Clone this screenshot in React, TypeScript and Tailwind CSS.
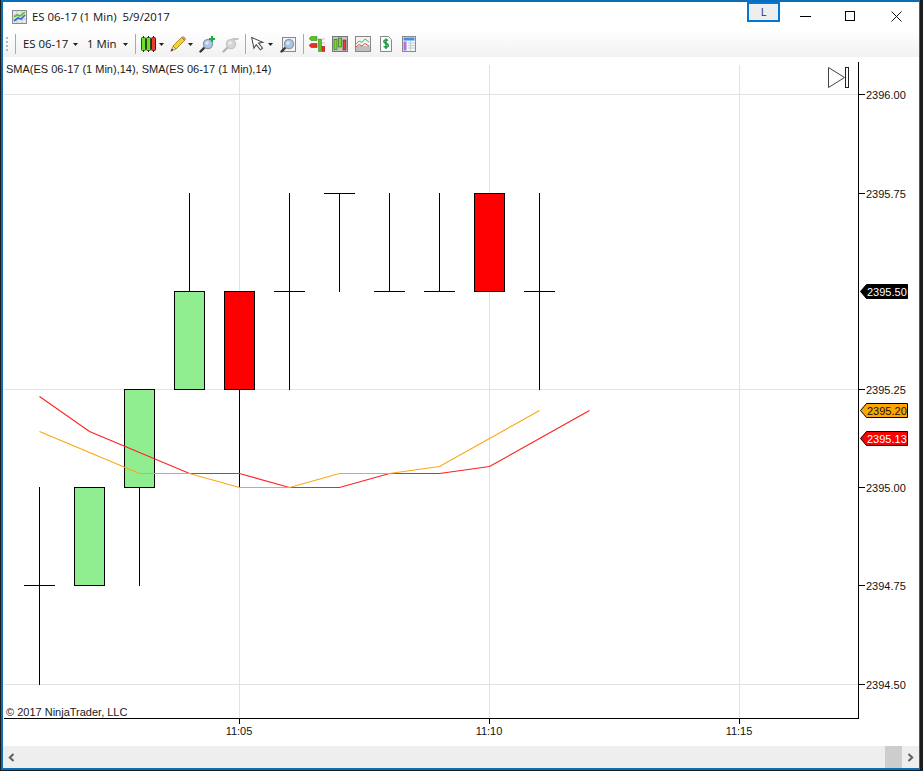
import React from "react";

const Caret = () => (
  <svg width="5" height="3" viewBox="0 0 5 3" className="shrink-0">
    <path d="M0 0h5L2.5 3z" fill="#222" />
  </svg>
);

const Sep = ({ cls }: { cls: string }) => <div className={`w-px h-[20px] bg-[#a8a8a8] shrink-0 ${cls}`} />;

const Lens = ({ gray }: { gray?: boolean }) => (
  <>
    <path d="M1.5 15.5 6 11" stroke={gray ? "#b5b5b5" : "#333"} strokeWidth="2.4" strokeLinecap="round" />
    <circle cx="9" cy="8" r="4.6" fill={gray ? "#d5d5d5" : "#a9c6e6"} stroke={gray ? "#c4c4c4" : "#8b9bab"} strokeWidth="1.2" />
    <circle cx="8" cy="7" r="1.8" fill={gray ? "#ececec" : "#dbe9f8"} />
  </>
);

const prices: [string, number][] = [
  ["2396.00", 94],
  ["2395.75", 193],
  ["2395.25", 389],
  ["2395.00", 487],
  ["2394.75", 585],
  ["2394.50", 684],
];

const times: [string, number][] = [
  ["11:05", 239],
  ["11:10", 489],
  ["11:15", 739],
];

type Candle = { x: number; wick: [number, number][]; body?: [number, number, string]; doji?: number };
const candles: Candle[] = [
  { x: 39, wick: [[487, 685]], doji: 585 },
  { x: 89, wick: [], body: [487, 585, "#90ee90"] },
  { x: 139, wick: [[487, 586]], body: [389, 487, "#90ee90"] },
  { x: 189, wick: [[193, 291]], body: [291, 389, "#90ee90"] },
  { x: 239, wick: [[389, 487]], body: [291, 389, "#ff0000"] },
  { x: 289, wick: [[193, 390]], doji: 291 },
  { x: 339, wick: [[193, 292]], doji: 193 },
  { x: 389, wick: [[193, 291]], doji: 291 },
  { x: 439, wick: [[193, 291]], doji: 291 },
  { x: 489, wick: [], body: [193, 291, "#ff0000"] },
  { x: 539, wick: [[193, 390]], doji: 291 },
];

const flags: [string, number, string, string][] = [
  ["2395.50", 291, "#000000", "#ffffff"],
  ["2395.20", 410, "#ffa500", "#111111"],
  ["2395.13", 438, "#ff0000", "#ffffff"],
];

const redLine = "39,396 89,431 139,452 189,473 239,473 289,487 339,487 389,473 439,473 489,466 539,438 589,410";
const orangeLine = "39,431 89,452 139,473 189,473 239,487 289,487 339,473 389,473 439,466 489,438 539,410";

const Chart = () => (
  <svg width="916" height="689" viewBox="3 57 916 689" className="block font-['Liberation_Sans',Arial,sans-serif] text-[11px]">
    <g shapeRendering="crispEdges" stroke="#e2e2e2">
      {[94, 389, 684].map((y) => (
        <line key={y} x1="4" x2="858" y1={y + 0.5} y2={y + 0.5} />
      ))}
      {[239, 489, 739].map((x) => (
        <line key={x} x1={x + 0.5} x2={x + 0.5} y1="65" y2="718" />
      ))}
    </g>
    <g shapeRendering="crispEdges" stroke="#000">
      {candles.map((c) => (
        <g key={c.x}>
          {c.wick.map(([a, b]) => (
            <line key={a} x1={c.x + 0.5} x2={c.x + 0.5} y1={a} y2={b} />
          ))}
          {c.doji !== undefined && <line x1={c.x - 15} x2={c.x + 16} y1={c.doji + 0.5} y2={c.doji + 0.5} />}
          {c.body && (
            <rect x={c.x - 14.5} y={c.body[0] + 0.5} width="30" height={c.body[1] - c.body[0]} fill={c.body[2]} />
          )}
        </g>
      ))}
    </g>
    <g transform="translate(0.5 0.5)">
      <polyline points={redLine} fill="none" stroke="#ff2020" strokeWidth="1.1" />
      <polyline points={orangeLine} fill="none" stroke="#ffa514" strokeWidth="1.1" />
    </g>

    <g shapeRendering="crispEdges" stroke="#000">
      <line x1="858.5" x2="858.5" y1="62" y2="719" />
      <line x1="4" x2="859" y1="718.5" y2="718.5" />
      {prices.map(([p, y]) => (
        <line key={p} x1="859" x2="865" y1={y + 0.5} y2={y + 0.5} />
      ))}
      {times.map(([t, x]) => (
        <line key={t} x1={x + 0.5} x2={x + 0.5} y1="719" y2="724" />
      ))}
    </g>

    {prices.map(([p, y]) => (
      <text key={p} x="866" y={y + 4.5} fill="#111">
        {p}
      </text>
    ))}
    {times.map(([t, x]) => (
      <text key={t} x={x} y="735" textAnchor="middle" fill="#111">
        {t}
      </text>
    ))}

    {flags.map(([p, y, bg, fg]) => (
      <g key={p}>
        <path
          d={`M860.5 ${y + 0.5}L866.5 ${y - 6.5}H907.5V${y + 7.5}H866.5Z`}
          fill={bg}
          stroke="#000"
          strokeWidth="1"
        />
        <text x="867" y={y + 4.5} fill={fg}>
          {p}
        </text>
      </g>
    ))}

    <text x="6" y="73" fill="#1a1a1a">
      SMA(ES 06-17 (1 Min),14), SMA(ES 06-17 (1 Min),14)
    </text>
    <text x="6" y="716" fill="#1a1a1a">
      © 2017 NinjaTrader, LLC
    </text>

    <path d="M828.5 67.5 844.5 77.5 828.5 87.5Z" fill="#fff" stroke="#444" strokeWidth="1" />
    <rect x="845.5" y="67.5" width="3" height="20" fill="#fff" stroke="#222" strokeWidth="1" />
  </svg>
);

export default function App() {
  return (
    <div className="w-[923px] h-[771px] bg-[#1c1c1c] overflow-hidden font-['Open_Sans',sans-serif] text-[11.4px] text-[#111]">
      <div className="ml-px w-[919px] h-[770px] border-l-2 border-r border-t-2 border-b-2 border-[#0b6cb8] bg-white flex flex-col">
        {/* title bar */}
        <div className="h-[29px] flex items-start shrink-0">
          <svg width="15" height="14" viewBox="0 0 15 14" className="ml-[9px] mt-[8px] shrink-0">
            <rect x="0.5" y="0.5" width="14" height="13" fill="#e6e8f0" stroke="#8a8a8a" />
            <path d="M5 1v12M10 1v12M1 5h13M1 9h13" stroke="#c4c6d2" />
            <path d="M2 11 6 8 9 9 13 5" stroke="#2f6fc4" strokeWidth="1.6" fill="none" />
            <path d="M2 7 5 5 8 6 13 2" stroke="#58c026" strokeWidth="1.6" fill="none" />
          </svg>
          <span className="ml-[5px] mt-[6px] leading-[17px] whitespace-pre w-[137px] shrink-0">ES 06-17 (1 Min)  5/9/2017</span>
          <div className="ml-[578px] w-[33px] h-[20px] border-2 border-[#0078d7] bg-[#eeeeee] flex items-center justify-center text-[11px] text-[#1f2a70] shrink-0">
            L
          </div>
          <div className="ml-[20px] mt-[14px] w-[11px] h-px bg-black shrink-0" />
          <div className="ml-[34px] mt-[9px] w-[10px] h-[10px] border border-black shrink-0" />
          <svg width="11" height="11" viewBox="0 0 11 11" className="ml-[36px] mt-[9px] shrink-0">
            <path d="M.5.5l10 10M10.5.5l-10 10" stroke="#111" strokeWidth="1" />
          </svg>
        </div>

        {/* toolbar */}
        <div className="h-[26px] flex items-center bg-gradient-to-b from-white to-[#f1f1f1] shrink-0">
          <div className="ml-[3px] w-[2px] h-[14px] border-l-2 border-dotted border-[#b8b8b8] shrink-0" />
          <Sep cls="ml-[7px]" />
          <span className="ml-[7px] w-[44px] whitespace-nowrap shrink-0">ES 06-17</span>
          <div className="ml-[6px] flex shrink-0"><Caret /></div>
          <span className="ml-[9px] w-[30px] whitespace-nowrap shrink-0">1 Min</span>
          <div className="ml-[6px] flex shrink-0"><Caret /></div>
          <Sep cls="ml-[7px]" />

          <svg width="15" height="16" viewBox="0 0 15 16" className="ml-[5px] shrink-0">
            <path d="M2.5 0v2M7.5 0v2M12.5 0v2M2.5 14v2M7.5 14v2M12.5 14v2" stroke="#222" />
            <rect x="0.5" y="1.5" width="4" height="13" rx="1" fill="#6fe02a" stroke="#2a4a1a" />
            <rect x="5.5" y="1.5" width="4" height="13" rx="1" fill="#6fe02a" stroke="#2a4a1a" />
            <rect x="10.5" y="1.5" width="4" height="13" rx="1" fill="#ee3b30" stroke="#4a1a1a" />
          </svg>
          <div className="ml-[3px] flex shrink-0"><Caret /></div>

          <svg width="16" height="16" viewBox="0 0 16 16" className="ml-[6px] shrink-0">
            <path d="M3 10 11.5 1.5l3 3L6 13z" fill="#f6d32c" stroke="#9a7a12" strokeWidth="0.8" />
            <path d="M11.5 1.5l3 3 1-1.2c.4-.6-1.6-2.8-2.6-2.6z" fill="#e9967a" stroke="#9a6a42" strokeWidth="0.6" />
            <path d="M3 10 6 13 .8 15.2z" fill="#f3dcb0" stroke="#8a6a32" strokeWidth="0.6" />
            <path d="M.8 15.2 2 12.6 3.4 14z" fill="#222" />
          </svg>
          <div className="ml-[2px] flex shrink-0"><Caret /></div>

          <svg width="17" height="17" viewBox="0 0 17 17" className="ml-[6px] shrink-0">
            <Lens />
            <path d="M13 0v6M10 3h6" stroke="#16b03a" strokeWidth="2" />
          </svg>
          <svg width="17" height="17" viewBox="0 0 17 17" className="ml-[6px] shrink-0">
            <Lens gray />
            <path d="M10.5 3h6" stroke="#c4c4c4" strokeWidth="2" />
          </svg>
          <Sep cls="ml-[6px]" />

          <svg width="15" height="16" viewBox="0 0 15 16" className="ml-[5px] shrink-0">
            <path d="M1 1v11l3-3 3 6 2.5-1.2L6.5 8H11L1 1z" transform="rotate(-12 3 3)" fill="#fff" stroke="#444" strokeWidth="1" />
          </svg>
          <div className="ml-[2px] flex shrink-0"><Caret /></div>

          <svg width="16" height="17" viewBox="0 0 16 17" className="ml-[7px] shrink-0">
            <rect x="2.5" y="1.5" width="13" height="14" fill="#f4f4f4" stroke="#8a8a8a" />
            <Lens />
          </svg>
          <Sep cls="ml-[7px]" />

          <svg width="16" height="16" viewBox="0 0 16 16" className="ml-[5px] shrink-0">
            <path d="M9 3h7M9 7h7M9 11h7" stroke="#c9c9c9" />
            <path d="M0 2.5 2 .5h6v4H2z" fill="#57c41f" stroke="#3a8c14" strokeWidth="0.6" />
            <path d="M0 9.5 2 7.5h6v4H2z" fill="#e8312a" stroke="#a0201a" strokeWidth="0.6" />
            <rect x="9.5" y="3.5" width="3" height="12" fill="#57c41f" stroke="#3a8c14" strokeWidth="0.6" />
            <rect x="13" y="10.5" width="3" height="5" fill="#e8312a" stroke="#a0201a" strokeWidth="0.6" />
          </svg>
          <svg width="16" height="16" viewBox="0 0 16 16" className="ml-[7px] shrink-0">
            <rect x="0.5" y="0.5" width="15" height="15" fill="#c4c4c4" stroke="#777" />
            <rect x="2" y="3.5" width="3" height="10" fill="#6fe02a" stroke="#333" strokeWidth="0.5" />
            <rect x="6.5" y="2" width="3" height="9" fill="#6fe02a" stroke="#333" strokeWidth="0.5" />
            <rect x="11" y="4" width="3" height="10" fill="#ee3b30" stroke="#333" strokeWidth="0.5" />
          </svg>
          <svg width="16" height="16" viewBox="0 0 16 16" className="ml-[7px] shrink-0">
            <rect x="0.5" y="0.5" width="15" height="15" fill="#f0f3f0" stroke="#888" />
            <rect x="1" y="10" width="14" height="5" fill="#bfbfbf" />
            <path d="M1 8 4 5l3 1.5L10 3l4 3" stroke="#3cc06a" fill="none" />
            <path d="M1 11 4 8.5 7 10l3-2.5 4 2.5" stroke="#e8484a" fill="none" />
          </svg>
          <svg width="12" height="16" viewBox="0 0 12 16" className="ml-[9px] shrink-0">
            <path d="M.5.5h8l3 3v12H.5z" fill="#fafafa" stroke="#888" />
            <path d="M8 4.5C7.5 3.6 3.8 3.4 3.8 5.6c0 2.4 4.6 1.4 4.6 3.8 0 2.2-3.9 2-4.7 1M6 2.5v10.5" stroke="#14903a" strokeWidth="1.4" fill="none" />
          </svg>
          <svg width="14" height="16" viewBox="0 0 14 16" className="ml-[10px] shrink-0">
            <rect x="0.5" y="0.5" width="13" height="15" fill="#f4f6f8" stroke="#8a8a8a" />
            <rect x="1.5" y="1.5" width="11" height="3" fill="#3f8fe0" />
            <rect x="1.5" y="5.5" width="3" height="9" fill="#b070e8" />
            <path d="M6 7h7M6 9.5h7M6 12h7M8.5 5v10" stroke="#c4ccd6" />
          </svg>
        </div>

        {/* chart */}
        <div className="shrink-0 h-[689px]">
          <Chart />
        </div>

        {/* scrollbar */}
        <div className="h-[22px] bg-[#eeeeee] flex items-center shrink-0">
          <svg width="7" height="9" viewBox="0 0 7 9" className="ml-[5px] shrink-0">
            <path d="M5.5 1 1.8 4.5 5.5 8" stroke="#606060" strokeWidth="2" fill="none" />
          </svg>
          <div className="ml-[870px] w-[17px] h-[22px] bg-[#cdcdcd] shrink-0" />
          <svg width="7" height="9" viewBox="0 0 7 9" className="ml-[5px] shrink-0">
            <path d="M1.5 1 5.2 4.5 1.5 8" stroke="#606060" strokeWidth="2" fill="none" />
          </svg>
        </div>
      </div>
    </div>
  );
}
